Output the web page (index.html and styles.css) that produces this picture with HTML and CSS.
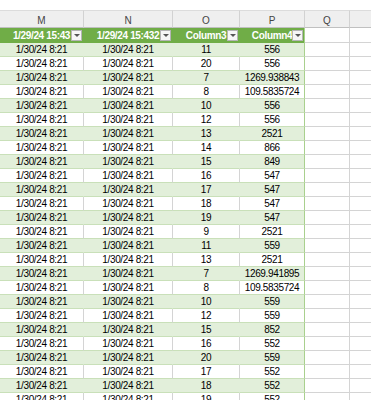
FILE: index.html
```html
<!DOCTYPE html>
<html>
<head>
<meta charset="utf-8">
<link rel="stylesheet" href="styles.css">
</head>
<body>
<div class="topband"></div>
<div class="sheet">
  <div class="row letters">
    <div class="c">M</div><div class="c">N</div><div class="c">O</div><div class="c">P</div><div class="c">Q</div><div class="c">R</div>
  </div>
  <div class="row thead">
    <div class="c t">1/29/24 15:43<span class="dd"></span></div>
    <div class="c t">1/29/24 15:432<span class="dd"></span></div>
    <div class="c t">Column3<span class="dd"></span></div>
    <div class="c t last">Column4<span class="dd"></span></div>
    <div class="c x"></div><div class="c x"></div>
  </div>
  <div class="row band"><div class="c t">1/30/24 8:21</div><div class="c t">1/30/24 8:21</div><div class="c t">11</div><div class="c t last">556</div><div class="c x"></div><div class="c x"></div></div>
  <div class="row"><div class="c t">1/30/24 8:21</div><div class="c t">1/30/24 8:21</div><div class="c t">20</div><div class="c t last">556</div><div class="c x"></div><div class="c x"></div></div>
  <div class="row band"><div class="c t">1/30/24 8:21</div><div class="c t">1/30/24 8:21</div><div class="c t">7</div><div class="c t last">1269.938843</div><div class="c x"></div><div class="c x"></div></div>
  <div class="row"><div class="c t">1/30/24 8:21</div><div class="c t">1/30/24 8:21</div><div class="c t">8</div><div class="c t last">109.5835724</div><div class="c x"></div><div class="c x"></div></div>
  <div class="row band"><div class="c t">1/30/24 8:21</div><div class="c t">1/30/24 8:21</div><div class="c t">10</div><div class="c t last">556</div><div class="c x"></div><div class="c x"></div></div>
  <div class="row"><div class="c t">1/30/24 8:21</div><div class="c t">1/30/24 8:21</div><div class="c t">12</div><div class="c t last">556</div><div class="c x"></div><div class="c x"></div></div>
  <div class="row band"><div class="c t">1/30/24 8:21</div><div class="c t">1/30/24 8:21</div><div class="c t">13</div><div class="c t last">2521</div><div class="c x"></div><div class="c x"></div></div>
  <div class="row"><div class="c t">1/30/24 8:21</div><div class="c t">1/30/24 8:21</div><div class="c t">14</div><div class="c t last">866</div><div class="c x"></div><div class="c x"></div></div>
  <div class="row band"><div class="c t">1/30/24 8:21</div><div class="c t">1/30/24 8:21</div><div class="c t">15</div><div class="c t last">849</div><div class="c x"></div><div class="c x"></div></div>
  <div class="row"><div class="c t">1/30/24 8:21</div><div class="c t">1/30/24 8:21</div><div class="c t">16</div><div class="c t last">547</div><div class="c x"></div><div class="c x"></div></div>
  <div class="row band"><div class="c t">1/30/24 8:21</div><div class="c t">1/30/24 8:21</div><div class="c t">17</div><div class="c t last">547</div><div class="c x"></div><div class="c x"></div></div>
  <div class="row"><div class="c t">1/30/24 8:21</div><div class="c t">1/30/24 8:21</div><div class="c t">18</div><div class="c t last">547</div><div class="c x"></div><div class="c x"></div></div>
  <div class="row band"><div class="c t">1/30/24 8:21</div><div class="c t">1/30/24 8:21</div><div class="c t">19</div><div class="c t last">547</div><div class="c x"></div><div class="c x"></div></div>
  <div class="row"><div class="c t">1/30/24 8:21</div><div class="c t">1/30/24 8:21</div><div class="c t">9</div><div class="c t last">2521</div><div class="c x"></div><div class="c x"></div></div>
  <div class="row band"><div class="c t">1/30/24 8:21</div><div class="c t">1/30/24 8:21</div><div class="c t">11</div><div class="c t last">559</div><div class="c x"></div><div class="c x"></div></div>
  <div class="row"><div class="c t">1/30/24 8:21</div><div class="c t">1/30/24 8:21</div><div class="c t">13</div><div class="c t last">2521</div><div class="c x"></div><div class="c x"></div></div>
  <div class="row band"><div class="c t">1/30/24 8:21</div><div class="c t">1/30/24 8:21</div><div class="c t">7</div><div class="c t last">1269.941895</div><div class="c x"></div><div class="c x"></div></div>
  <div class="row"><div class="c t">1/30/24 8:21</div><div class="c t">1/30/24 8:21</div><div class="c t">8</div><div class="c t last">109.5835724</div><div class="c x"></div><div class="c x"></div></div>
  <div class="row band"><div class="c t">1/30/24 8:21</div><div class="c t">1/30/24 8:21</div><div class="c t">10</div><div class="c t last">559</div><div class="c x"></div><div class="c x"></div></div>
  <div class="row"><div class="c t">1/30/24 8:21</div><div class="c t">1/30/24 8:21</div><div class="c t">12</div><div class="c t last">559</div><div class="c x"></div><div class="c x"></div></div>
  <div class="row band"><div class="c t">1/30/24 8:21</div><div class="c t">1/30/24 8:21</div><div class="c t">15</div><div class="c t last">852</div><div class="c x"></div><div class="c x"></div></div>
  <div class="row"><div class="c t">1/30/24 8:21</div><div class="c t">1/30/24 8:21</div><div class="c t">16</div><div class="c t last">552</div><div class="c x"></div><div class="c x"></div></div>
  <div class="row band"><div class="c t">1/30/24 8:21</div><div class="c t">1/30/24 8:21</div><div class="c t">20</div><div class="c t last">559</div><div class="c x"></div><div class="c x"></div></div>
  <div class="row"><div class="c t">1/30/24 8:21</div><div class="c t">1/30/24 8:21</div><div class="c t">17</div><div class="c t last">552</div><div class="c x"></div><div class="c x"></div></div>
  <div class="row band"><div class="c t">1/30/24 8:21</div><div class="c t">1/30/24 8:21</div><div class="c t">18</div><div class="c t last">552</div><div class="c x"></div><div class="c x"></div></div>
  <div class="row"><div class="c t">1/30/24 8:21</div><div class="c t">1/30/24 8:21</div><div class="c t">19</div><div class="c t last">552</div><div class="c x"></div><div class="c x"></div></div>
</div>
</body>
</html>
```
FILE: styles.css
```css
html, body {
  margin: 0;
  padding: 0;
  background: #ffffff;
  overflow: hidden;
}
body {
  font-family: "Liberation Sans", Arial, sans-serif;
  font-size: 10px;
  letter-spacing: -0.35px;
  color: #000000;
}
.topband {
  height: 10px;
  background: #ffffff;
}
.sheet {
  width: 420px;
}
.row {
  display: grid;
  grid-template-columns: 84px 89px 67px 65px 45px 70px;
  height: 14px;
}
.c {
  box-sizing: border-box;
  height: 100%;
  text-align: center;
  white-space: nowrap;
  overflow: hidden;
  line-height: 13px;
  border-right: 1px solid #d4d4d4;
  border-bottom: 1px solid #d4d4d4;
  position: relative;
}
.letters {
  height: 18px;
  background: #efefef;
}
.letters .c {
  line-height: 19px;
  color: #444444;
  letter-spacing: 0;
  border-right-color: #d2d2d2;
  border-bottom: 1px solid #c0c0c0;
  border-top: 1px solid #dcdcdc;
}
.thead {
  height: 15px;
}
.thead .t {
  background: #70ad47;
  color: #ffffff;
  font-weight: bold;
  line-height: 15px;
  border-right-color: #70ad47;
  border-bottom: none;
}
.thead .t.last {
  border-right-color: #a9d08e;
}
.row .t {
  border-bottom-color: #c9e0b9;
}
.band .t {
  background: #e2efda;
  border-right-color: #e2efda;
}
.row .t.last {
  border-right-color: #a9d08e;
}
.dd {
  position: absolute;
  right: 1px;
  top: 2px;
  width: 11px;
  height: 11px;
  box-sizing: border-box;
  background: #f6f6f6;
  border: 1px solid #b5b5b5;
}
.dd::after {
  content: "";
  position: absolute;
  left: 2px;
  top: 3px;
  border-left: 3px solid transparent;
  border-right: 3px solid transparent;
  border-top: 3px solid #555555;
}
```
